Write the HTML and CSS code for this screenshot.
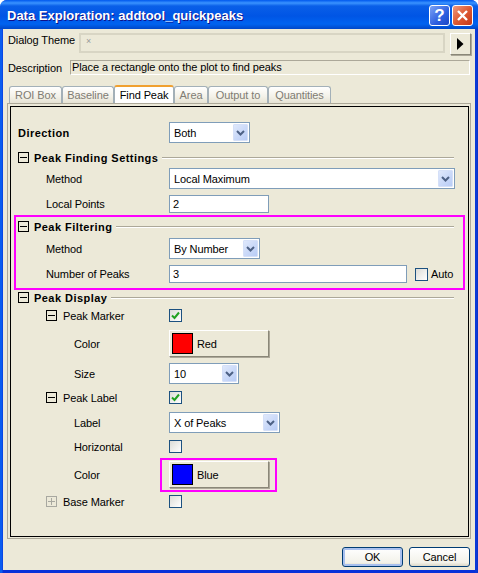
FILE: index.html
```html
<!DOCTYPE html>
<html lang="en">
<head>
  <meta charset="UTF-8">
  <meta name="viewport" content="width=device-width, initial-scale=1">
  <title>Data Exploration: addtool_quickpeaks</title>
  <link rel="stylesheet" href="styles.css">
</head>
<body>

<div class="window">
  <div class="titlebar">
    <span class="title">Data Exploration: addtool_quickpeaks</span>
    <span class="cap-btn cap-help">?</span>
    <span class="cap-btn cap-close">
      <svg width="13" height="13" viewBox="0 0 13 13"><path d="M2 2 L11 11 M11 2 L2 11" stroke="#fff" stroke-width="2.4" fill="none"/></svg>
    </span>
  </div>

  <div class="client">
    <!-- theme and description -->
    <div class="theme-row">
      <span class="theme-label">Dialog Theme</span>
      <div class="theme-field">×</div>
      <button class="arrow-btn">
        <svg width="7" height="12" viewBox="0 0 7 12"><path d="M0 0 L6.5 6 L0 12 Z" fill="#000"/></svg>
      </button>
    </div>
    <div class="desc-row">
      <span class="desc-label">Description</span>
      <div class="desc-field">Place a rectangle onto the plot to find peaks</div>
    </div>

    <div class="tabs">
      <span class="tab tab-roi">ROI Box</span>
      <span class="tab tab-base">Baseline</span>
      <span class="tab tab-active">Find Peak</span>
      <span class="tab tab-area">Area</span>
      <span class="tab tab-output">Output to</span>
      <span class="tab tab-quant">Quantities</span>
    </div>

    <div class="panel">
      <div class="panel-inner">
        <div class="row h21 dir-row">
          <span class="label lead">Direction</span>
          <div class="select w81"><span>Both</span><i class="drop"><svg width="9" height="6" viewBox="0 0 9 6"><path d="M1 1 L4.5 4.5 L8 1" stroke="#4d6185" stroke-width="2" fill="none"/></svg></i></div>
        </div>

        <div class="heading h13 mt8">
          <span class="tree"><b class="minus"></b></span>
          <span class="lead">Peak Finding Settings</span>
          <span class="rule"></span>
        </div>
        <div class="row h21 mt4">
          <span class="label lv1">Method</span>
          <div class="select w286"><span>Local Maximum</span><i class="drop"><svg width="9" height="6" viewBox="0 0 9 6"><path d="M1 1 L4.5 4.5 L8 1" stroke="#4d6185" stroke-width="2" fill="none"/></svg></i></div>
        </div>
        <div class="row h18 mt6">
          <span class="label lv1">Local Points</span>
          <div class="input w100">2</div>
        </div>

        <div class="marked">
          <div class="heading h13">
            <span class="tree"><b class="minus"></b></span>
            <span class="lead">Peak Filtering</span>
            <span class="rule"></span>
          </div>
          <div class="row h21 mt5">
            <span class="label lv1">Method</span>
            <div class="select w91"><span>By Number</span><i class="drop"><svg width="9" height="6" viewBox="0 0 9 6"><path d="M1 1 L4.5 4.5 L8 1" stroke="#4d6185" stroke-width="2" fill="none"/></svg></i></div>
          </div>
          <div class="row h18 mt6">
            <span class="label lv1">Number of Peaks</span>
            <div class="auto-wrap">
              <div class="input w238">3</div>
              <span class="check"></span>
              <span class="auto-text">Auto</span>
            </div>
          </div>
        </div>

        <div class="heading h13 mt3">
          <span class="tree"><b class="minus"></b></span>
          <span class="lead">Peak Display</span>
          <span class="rule"></span>
        </div>
        <div class="row h13 mt5">
          <span class="label lv1 with-tree"><span class="tree"><b class="minus"></b></span>Peak Marker</span>
          <span class="check"><svg width="11" height="11" viewBox="0 0 11 11"><path d="M2 5.5 L4.5 8 L9 2.5" stroke="#21a121" stroke-width="2" fill="none"/></svg></span>
        </div>
        <div class="row h27 mt8">
          <span class="label lv2">Color</span>
          <button class="color-btn"><i class="swatch red"></i>Red</button>
        </div>
        <div class="row h21 mt6">
          <span class="label lv2">Size</span>
          <div class="select w70"><span>10</span><i class="drop"><svg width="9" height="6" viewBox="0 0 9 6"><path d="M1 1 L4.5 4.5 L8 1" stroke="#4d6185" stroke-width="2" fill="none"/></svg></i></div>
        </div>
        <div class="row h13 mt7">
          <span class="label lv1 with-tree"><span class="tree"><b class="minus"></b></span>Peak Label</span>
          <span class="check"><svg width="11" height="11" viewBox="0 0 11 11"><path d="M2 5.5 L4.5 8 L9 2.5" stroke="#21a121" stroke-width="2" fill="none"/></svg></span>
        </div>
        <div class="row h21 mt8">
          <span class="label lv2">Label</span>
          <div class="select w111"><span>X of Peaks</span><i class="drop"><svg width="9" height="6" viewBox="0 0 9 6"><path d="M1 1 L4.5 4.5 L8 1" stroke="#4d6185" stroke-width="2" fill="none"/></svg></i></div>
        </div>
        <div class="row h13 mt7">
          <span class="label lv2">Horizontal</span>
          <span class="check"></span>
        </div>
        <div class="row h27 mt8">
          <span class="label lv2">Color</span>
          <button class="color-btn color-marked"><i class="swatch blue"></i>Blue</button>
        </div>
        <div class="row h13 mt7">
          <span class="label lv1 with-tree"><span class="tree tree-off"><b class="plus"></b></span>Base Marker</span>
          <span class="check"></span>
        </div>
      </div>
    </div>

    <div class="footer">
      <button class="xp-btn xp-default">OK</button>
      <button class="xp-btn">Cancel</button>
    </div>
  </div>
</div>

</body>
</html>
```

FILE: styles.css
```css
* {
  box-sizing: border-box;
}
html, body {
  margin: 0;
  padding: 0;
  background: #fff;
}
body {
  width: 478px;
  height: 573px;
  overflow: hidden;
  font-family: "Liberation Sans", Arial, sans-serif;
  font-size: 11px;
  letter-spacing: -0.1px;
  color: #000;
}
button {
  font: inherit;
  letter-spacing: inherit;
  color: inherit;
  padding: 0;
}
.window {
  width: 478px;
  height: 573px;
  background: linear-gradient(to right, #0a5cf0 0, #0a5cf0 2px, #0831d9 3px, #0831d9 475px, #0a3fd8 476px, #0a2fc8 100%);
  border-radius: 7px 7px 0 0;
  padding: 0 3px 3px;
  display: flex;
  flex-direction: column;
}

/* title bar */
.titlebar {
  height: 29px;
  margin: 0 -3px;
  padding: 0 5px 0 7px;
  border-radius: 7px 7px 0 0;
  background: linear-gradient(to bottom, #0058ee 0, #3a93ff 3px, #0a5fe8 6px, #0055e5 16px, #0063f0 24px, #0047c8 29px);
  display: flex;
  align-items: center;
  gap: 2px;
}
.title {
  flex: 1;
  color: #fff;
  font-weight: bold;
  font-size: 13px;
  letter-spacing: 0;
  text-shadow: 1px 1px 0 #0f1089;
  margin-top: 2px;
}
.cap-btn {
  width: 21px;
  height: 21px;
  margin-top: 2px;
  border: 1px solid #fff;
  border-radius: 3px;
  display: flex;
  align-items: center;
  justify-content: center;
  color: #fff;
}
.cap-help {
  background: linear-gradient(135deg, #7ba2f5, #2d5fe0 60%, #1c46c4);
  font-size: 17px;
  font-weight: bold;
}
.cap-close {
  background: linear-gradient(135deg, #ef9a7f, #de5a33 50%, #c3371a);
}

.client {
  flex: 1;
  background: #ece9d8;
  padding: 4px 0 0;
  display: flex;
  flex-direction: column;
}

/* theme and description */
.theme-row {
  display: flex;
  align-items: flex-start;
  height: 22px;
  margin-left: 5px;
}
.theme-label {
  width: 71px;
  line-height: 15px;
}
.theme-field {
  width: 366px;
  height: 20px;
  border: 2px solid #d8d5c4;
  color: #999;
  font-size: 9px;
  padding-left: 5px;
  line-height: 12px;
}
.arrow-btn {
  width: 21px;
  height: 22px;
  margin-left: 5px;
  background: #ece9d8;
  border: 1px solid;
  border-color: #fff #8a8778 #8a8778 #fff;
  box-shadow: 1px 1px 0 #aca899;
  display: flex;
  align-items: center;
  justify-content: center;
}
.desc-row {
  display: flex;
  align-items: center;
  height: 15px;
  margin: 5px 0 0 5px;
}
.desc-label {
  width: 62px;
}
.desc-field {
  width: 400px;
  height: 15px;
  border: 1px solid;
  border-color: #aca899 #fff #fff #aca899;
  padding-left: 1px;
  line-height: 13px;
}

/* tabs */
.tabs {
  display: flex;
  height: 17px;
  margin: 11px 0 0 6px;
}
.tab {
  height: 17px;
  text-align: center;
  line-height: 17px;
  color: #7f7c73;
  border: 1px solid #a3b0b8;
  border-bottom: none;
  border-radius: 3px 3px 0 0;
  background: linear-gradient(to bottom, #fff, #f3f1e8 60%, #e6e3d4);
}
.tab-roi { width: 53px; }
.tab-base { width: 52px; }
.tab-active {
  width: 60px;
  height: 18px;
  margin-top: -1px;
  color: #000;
  background: #fff;
  border-top: 2px solid #f0a030;
}
.tab-area { width: 34px; }
.tab-output { width: 60px; }
.tab-quant { width: 63px; }

.panel {
  width: 464px;
  height: 436px;
  margin-left: 4px;
  border: 1px solid #aca899;
  padding: 2px;
}
.panel-inner {
  height: 431px;
  width: 459px;
  border: 1px solid #000;
  padding: 15px 0 0 7px;
}

/* rows */
.row {
  display: flex;
  align-items: center;
}
.label {
  width: 151px;
  flex: none;
}
.lv1 { padding-left: 28px; }
.lv2 { padding-left: 56px; }
.with-tree {
  display: flex;
  align-items: center;
}
.with-tree .tree {
  margin-right: 6px;
}
.lead {
  font-weight: bold;
  letter-spacing: 0.45px;
}
.heading {
  display: flex;
  align-items: center;
  width: 436px;
}
.heading .tree {
  margin-right: 5px;
}
.rule {
  flex: 1;
  height: 2px;
  margin-left: 4px;
  background: #aca899;
  border-bottom: 1px solid #fff;
}
.h13 { height: 13px; }
.h18 { height: 18px; }
.h21 { height: 21px; }
.h27 { height: 27px; }
.mt3 { margin-top: 3px; }
.mt4 { margin-top: 4px; }
.mt5 { margin-top: 5px; }
.mt6 { margin-top: 6px; }
.mt7 { margin-top: 7px; }
.mt8 { margin-top: 8px; }

/* tree toggles */
.tree {
  width: 11px;
  height: 11px;
  flex: none;
  border: 1px solid #000;
  position: relative;
  display: inline-block;
}
.tree-off {
  border-color: #a8a8a0;
}
.minus, .plus {
  position: absolute;
  left: 1px;
  right: 1px;
  top: 4px;
  height: 1px;
  background: #000;
}
.plus {
  background: #a8a8a0;
}
.plus::after {
  content: "";
  position: absolute;
  left: 3px;
  top: -3px;
  width: 1px;
  height: 7px;
  background: #a8a8a0;
}

/* controls */
.select {
  height: 21px;
  border: 1px solid #7f9db9;
  background: #fff;
  padding: 1px 1px 1px 4px;
  display: flex;
  align-items: center;
  justify-content: space-between;
}
.w70 { width: 70px; }
.w81 { width: 81px; }
.w91 { width: 91px; }
.w111 { width: 111px; }
.w286 { width: 286px; }
.w100 { width: 100px; }
.w238 { width: 238px; }
.drop {
  width: 15px;
  height: 17px;
  background: linear-gradient(135deg, #dfe8fb, #b8ccf6);
  border: 1px solid #d5e0f8;
  border-radius: 1px;
  display: flex;
  align-items: center;
  justify-content: center;
}
.input {
  height: 18px;
  border: 1px solid #7f9db9;
  background: #fff;
  padding-left: 3px;
  line-height: 16px;
}
.auto-wrap {
  display: flex;
  align-items: center;
}
.auto-wrap .check {
  margin-left: 8px;
}
.auto-text {
  margin-left: 3px;
}
.check {
  width: 13px;
  height: 13px;
  flex: none;
  border: 1px solid #1c5180;
  background: linear-gradient(135deg, #dcdcd7, #fff);
  display: block;
}
.check svg {
  display: block;
}
.color-btn {
  width: 100px;
  height: 27px;
  background: #ece9d8;
  border: 1px solid;
  border-color: #fff #8a8778 #8a8778 #fff;
  box-shadow: 1px 1px 0 #aca899;
  display: flex;
  align-items: center;
  padding-left: 2px;
  position: relative;
}
.swatch {
  width: 21px;
  height: 21px;
  border: 1px solid #000;
  margin-right: 4px;
}
.red { background: #f00; }
.blue { background: #00f; }
.color-marked::after {
  content: "";
  position: absolute;
  left: -10px;
  right: -9px;
  top: -4px;
  bottom: -5px;
  border: 2px solid #f0f;
}
.marked {
  width: 447px;
  height: 71px;
  margin: 4px 0 0 -2px;
  padding: 3px 0 0 2px;
  outline: 2px solid #f0f;
}

/* dialog buttons */
.footer {
  display: flex;
  justify-content: flex-end;
  gap: 6px;
  padding: 8px 5px 0 0;
}
.xp-btn {
  width: 61px;
  height: 20px;
  background: linear-gradient(to bottom, #fff, #f3f2ea 80%, #dcd8c8);
  border: 1px solid #003c74;
  border-radius: 3px;
}
.xp-default {
  box-shadow: inset 0 0 0 2px #a8c0ee;
}
```
